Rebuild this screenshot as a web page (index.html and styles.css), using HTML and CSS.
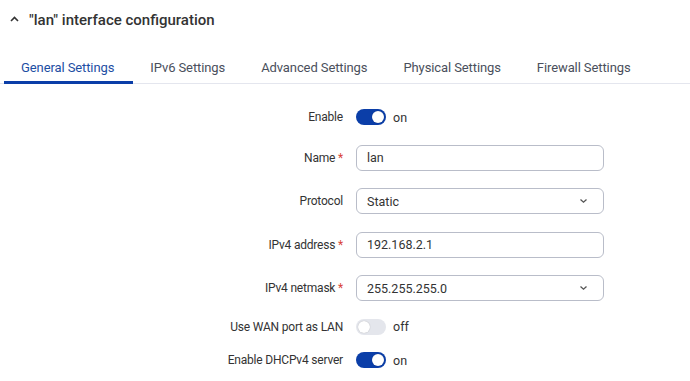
FILE: index.html
```html
<!DOCTYPE html>
<html lang="en">
<head>
    <meta charset="UTF-8">
    <meta name="viewport" content="width=device-width, initial-scale=1.0">
    <title>Interface configuration</title>
    <link rel="stylesheet" href="styles.css">
</head>
<body>
<div class="panel">
    <div class="panel-header">
        <svg class="collapse-icon" width="9" height="6" viewBox="0 0 9 6">
            <path d="M1 5 L4.5 1.5 L8 5" fill="none" stroke="#333" stroke-width="1.6"/>
        </svg>
        <h2>"lan" interface configuration</h2>
    </div>

    <ul class="tabs">
        <li class="tab active">General Settings</li>
        <li class="tab">IPv6 Settings</li>
        <li class="tab">Advanced Settings</li>
        <li class="tab">Physical Settings</li>
        <li class="tab">Firewall Settings</li>
    </ul>

    <form class="settings-form">
        <div class="form-row">
            <label>Enable</label>
            <div class="control">
                <span class="switch on"><span class="knob"></span></span>
                <span class="switch-text">on</span>
            </div>
        </div>
        <div class="form-row">
            <label for="name">Name <span class="req">*</span></label>
            <div class="control">
                <input type="text" id="name" value="lan">
            </div>
        </div>
        <div class="form-row">
            <label>Protocol</label>
            <div class="control">
                <div class="select">
                    <span>Static</span>
                    <svg width="9" height="6" viewBox="0 0 9 6">
                        <path d="M1.5 1.5 L4.5 4.2 L7.5 1.5" fill="none" stroke="#555" stroke-width="1.3"/>
                    </svg>
                </div>
            </div>
        </div>
        <div class="form-row">
            <label for="ipaddr">IPv4 address <span class="req">*</span></label>
            <div class="control">
                <input type="text" id="ipaddr" value="192.168.2.1">
            </div>
        </div>
        <div class="form-row">
            <label>IPv4 netmask <span class="req">*</span></label>
            <div class="control">
                <div class="select">
                    <span>255.255.255.0</span>
                    <svg width="9" height="6" viewBox="0 0 9 6">
                        <path d="M1.5 1.5 L4.5 4.2 L7.5 1.5" fill="none" stroke="#555" stroke-width="1.3"/>
                    </svg>
                </div>
            </div>
        </div>
        <div class="form-row tight">
            <label>Use WAN port as LAN</label>
            <div class="control">
                <span class="switch"><span class="knob"></span></span>
                <span class="switch-text">off</span>
            </div>
        </div>
        <div class="form-row tighter">
            <label>Enable DHCPv4 server</label>
            <div class="control">
                <span class="switch on"><span class="knob"></span></span>
                <span class="switch-text">on</span>
            </div>
        </div>
    </form>
</div>
</body>
</html>
```

FILE: styles.css
```css
body {
    font-family: Roboto, "Open Sans", sans-serif;
    background-color: #fff;
    color: #333;
    margin: 0;
    padding: 0;
}
.panel-header {
    display: flex;
    align-items: center;
    height: 39px;
    padding-left: 10px;
}
.collapse-icon {
    margin-right: 10px;
    margin-top: -1px;
}
.panel-header h2 {
    margin: 0;
    font-size: 15px;
    font-weight: 500;
    color: #333;
}
.tabs {
    display: flex;
    list-style: none;
    margin: 15px 0 0 0;
    padding: 0 0 0 4px;
    border-bottom: 1px solid #e4e6ee;
}
.tab {
    padding: 6px 19px 6px 17px;
    font-size: 13px;
    letter-spacing: -0.1px;
    color: #4a4f5c;
    border-bottom: 3px solid transparent;
    margin-bottom: -1px;
    white-space: nowrap;
}
.tab.active {
    color: #1d4ea3;
    border-bottom-color: #0b3ea8;
}
.settings-form {
    display: flex;
    flex-direction: column;
    gap: 17.5px;
    padding-top: 23px;
}
.form-row {
    display: flex;
    align-items: center;
    min-height: 20px;
}
.form-row.tight {
    margin-top: -2px;
}
.form-row.tighter {
    margin-top: -4px;
}
.form-row label {
    width: 343px;
    text-align: right;
    padding-right: 13px;
    font-size: 12px;
    letter-spacing: -0.2px;
    color: #333;
}
.req {
    color: #d9443a;
}
.control {
    display: flex;
    align-items: center;
    width: 248px;
    font-size: 12.5px;
}
.control input,
.select {
    box-sizing: border-box;
    width: 248px;
    height: 26px;
    border: 1px solid #b9bdc9;
    border-radius: 6px;
    padding: 0 10px;
    font-family: inherit;
    font-size: 12.5px;
    color: #333;
}
.select {
    display: flex;
    align-items: center;
    justify-content: space-between;
    padding-right: 15px;
}
.switch {
    position: relative;
    display: inline-block;
    width: 30px;
    height: 16px;
    border-radius: 8px;
    background-color: #e4e6ec;
}
.switch.on {
    background-color: #0b3ea8;
}
.knob {
    position: absolute;
    top: 2px;
    left: 2px;
    width: 12px;
    height: 12px;
    border-radius: 50%;
    background: #fff;
    box-shadow: 0 0 1px rgba(0, 0, 0, 0.3);
}
.switch.on .knob {
    left: 16px;
}
.switch-text {
    margin-left: 7px;
    color: #333;
}
```
